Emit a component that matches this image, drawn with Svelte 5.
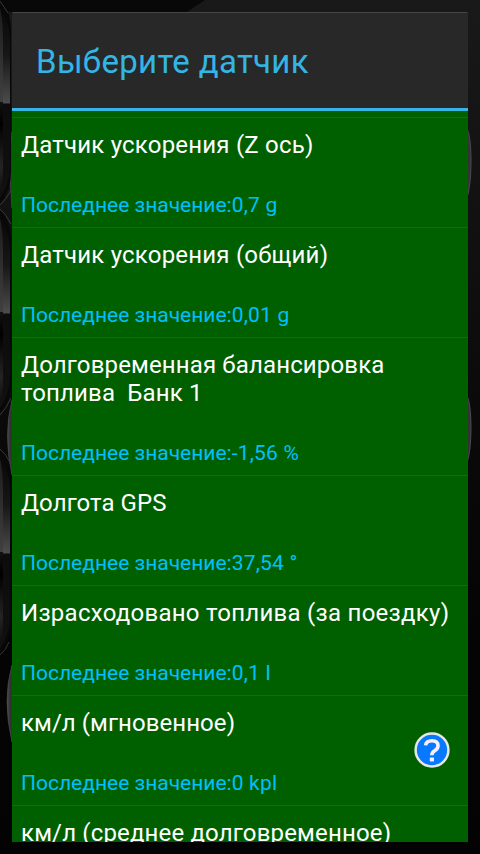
<script>
  const label = 'Последнее значение:';
  const sensors = [
    { name: 'Датчик ускорения (Z ось)', value: '0,7 g', tracking: 0.2 },
    { name: 'Датчик ускорения (общий)', value: '0,01 g', tracking: 0.2 },
    { name: 'Долговременная балансировка\nтоплива  Банк 1', value: '-1,56 %', tracking: 0.14 },
    { name: 'Долгота GPS', value: '37,54 °', tracking: 0.07 },
    { name: 'Израсходовано топлива (за поездку)', value: '0,1 l', tracking: 0.26 },
    { name: 'км/л (мгновенное)', value: '0 kpl', tracking: 0.06 },
    { name: 'км/л (среднее долговременное)', value: '', tracking: 0.16 }
  ];
  const gauges = [0, 210, 450];
</script>

<div class="screen">
  <svg class="backdrop" width="480" height="854" viewBox="0 0 480 854" aria-hidden="true">
    <defs>
      <linearGradient id="base" x1="0" y1="0" x2="0" y2="1">
        <stop offset="0" stop-color="#191919" />
        <stop offset="0.45" stop-color="#0b0b0b" />
        <stop offset="0.75" stop-color="#040404" />
        <stop offset="1" stop-color="#030303" />
      </linearGradient>
      <linearGradient id="glass" x1="0" y1="0" x2="0" y2="1">
        <stop offset="0" stop-color="#1c1c1c" />
        <stop offset="0.22" stop-color="#2c2c2c" />
        <stop offset="0.5" stop-color="#404040" />
        <stop offset="0.505" stop-color="#111" />
        <stop offset="0.62" stop-color="#000" />
        <stop offset="0.85" stop-color="#242424" />
        <stop offset="1" stop-color="#0c0c0c" />
      </linearGradient>
      <linearGradient id="bevel" x1="0" y1="0" x2="0" y2="1">
        <stop offset="0" stop-color="#080808" />
        <stop offset="0.25" stop-color="#171717" />
        <stop offset="0.5" stop-color="#4c4c4c" />
        <stop offset="0.505" stop-color="#0c0c0c" />
        <stop offset="1" stop-color="#101010" />
      </linearGradient>
      <linearGradient id="rim" x1="0" y1="0" x2="1" y2="0">
        <stop offset="0" stop-color="#4a4a4a" />
        <stop offset="1" stop-color="#262626" />
      </linearGradient>
    </defs>
    <rect width="480" height="854" fill="url(#base)" />
    <path d="M0 0H205L187 12H0Z" fill="#080808" />
    <path d="M12 132Q8 160 12 208ZM12 400Q3 435 12 475ZM12 665Q2 700 12 742Z" fill="url(#rim)" stroke="#505050" stroke-width="0.6" />
    <path d="M467 128Q471 138 471 160Q471 185 467 198ZM467 395Q471 405 471 428Q471 450 467 463Z" fill="#333" stroke="#4b4b4b" />
    {#each gauges as y}
      <g transform="translate(0 {y})">
        <path d="M0 0Q11 8 11 35V172Q11 190 0 204Z" fill="#080808" />
        <path d="M0 8Q10 20 10 44V165Q10 184 0 198Z" fill="url(#bevel)" />
        <path d="M0 8Q3 20 3 42V166Q3 184 0 195Z" fill="url(#glass)" />
      </g>
    {/each}
    <path d="M0 1L8 13M0 205Q6 200 11 190M0 209Q6 214 11 224M0 415Q6 409 11 398M0 449Q6 454 11 464M0 655Q6 650 9 642" stroke="#444" stroke-width="0.8" fill="none" />
  </svg>

  <main class="dialog">
    <header><h1>Выберите датчик</h1></header>
    <ul>
      {#each sensors as sensor}
        <li>
          <div class="name" style="letter-spacing: {sensor.tracking}px">{sensor.name}</div>
          {#if sensor.value}
            <div class="value">{label}<span>{sensor.value}</span></div>
          {/if}
        </li>
      {/each}
    </ul>
  </main>

  <svg class="help" width="38" height="38" viewBox="0 0 38 38" role="img" aria-label="?">
    <circle cx="19" cy="19" r="16.4" fill="#0878ff" stroke="#e6e8e5" stroke-width="2.5" />
    <path d="M12.6 14.4Q13.1 9.7 19 9.7Q25 9.7 25 14.7Q25 17.5 22 19.5Q18.8 21.5 18.8 24.3" fill="none" stroke="#f2f0ff" stroke-width="3.6" />
    <rect x="16.8" y="26.4" width="4.2" height="4" rx="0.7" fill="#f2f0ff" />
  </svg>
</div>

<style>
  :global(body) { margin: 0; background: #050505; }
  .screen {
    position: relative;
    box-sizing: border-box;
    width: 480px;
    height: 854px;
    padding: 12px;
    overflow: hidden;
    font-family: Roboto, "Noto Sans", sans-serif;
  }
  .backdrop { position: absolute; left: 0; top: 0; }
  .dialog {
    position: relative;
    display: flex;
    flex-direction: column;
    height: 830px;
    overflow: hidden;
    border-radius: 2px 2px 0 0;
    background: #006000;
  }
  header {
    box-sizing: border-box;
    flex: none;
    height: 99px;
    padding: 29px 24px 0;
    border-top: 1px solid #464646;
    border-bottom: 3px solid #33b5e5;
    background: #282828;
  }
  h1 {
    margin: 0;
    font-size: 33px;
    line-height: 40px;
    font-weight: 400;
    letter-spacing: 0.32px;
    color: #33b5e5;
  }
  ul { list-style: none; margin: 0; padding: 6px 0 0; }
  li {
    padding: 13px 9px 8px;
    border-top: 1px solid #464846;
  }
  .name {
    font-size: 24px;
    line-height: 28px;
    color: #fff;
    white-space: pre;
  }
  .value {
    margin-top: 32px;
    font-size: 21px;
    line-height: 28px;
    color: #00bfff;
    white-space: pre;
  }
  .value span { letter-spacing: 0.2px; }
  .help { position: absolute; left: 413px; top: 731px; }
</style>
